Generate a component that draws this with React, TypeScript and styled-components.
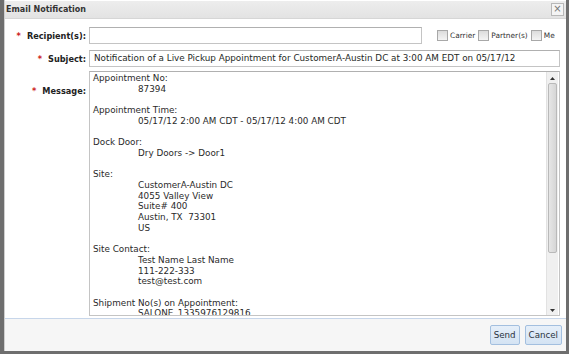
import styled, { createGlobalStyle } from "styled-components"

const GlobalStyle = createGlobalStyle`
  html, body {
    margin:0;
    padding:0;
    background:#6e6e6e;
    font-family:"DejaVu Sans", Verdana, sans-serif;
  }
`

type Line = { text: string; indent?: boolean }

const sections: Line[][] = [
  [{ text: "Appointment No:" }, { text: "87394", indent: true }],
  [{ text: "Appointment Time:" }, { text: "05/17/12 2:00 AM CDT - 05/17/12 4:00 AM CDT", indent: true }],
  [{ text: "Dock Door:" }, { text: "Dry Doors -> Door1", indent: true }],
  [
    { text: "Site:" },
    { text: "CustomerA-Austin DC", indent: true },
    { text: "4055 Valley View", indent: true },
    { text: "Suite# 400", indent: true },
    { text: "Austin, TX  73301", indent: true },
    { text: "US", indent: true },
  ],
  [
    { text: "Site Contact:" },
    { text: "Test Name Last Name", indent: true },
    { text: "111-222-333", indent: true },
    { text: "test@test.com", indent: true },
  ],
  [{ text: "Shipment No(s) on Appointment:" }, { text: "SALONE_1335976129816", indent: true }],
]

const App = () => {
  return (
    <>
      <GlobalStyle />
      <Dialog>
        <TitleBar>
          <span>Email Notification</span>
          <CloseButton>×</CloseButton>
        </TitleBar>

        <Body>
          <FieldRow>
            <Label><Req>*</Req>Recipient(s):</Label>
            <TextInput $width={333} />
            <Checks>
              <CheckItem><Box />Carrier</CheckItem>
              <CheckItem><Box />Partner(s)</CheckItem>
              <CheckItem><Box />Me</CheckItem>
            </Checks>
          </FieldRow>

          <FieldRow $gap={6}>
            <Label><Req>*</Req>Subject:</Label>
            <TextInput $width={471}>
              Notification of a Live Pickup Appointment for CustomerA-Austin DC at 3:00 AM EDT on 05/17/12
            </TextInput>
          </FieldRow>

          <MessageRow>
            <Label $top><Req>*</Req>Message:</Label>
            <MessageBox>
              <MessageText>
                {sections.map((sec, i) => (
                  <Section key={i}>
                    {sec.map((l, j) => (
                      <TextLine key={j} $indent={l.indent}>{l.text}</TextLine>
                    ))}
                  </Section>
                ))}
              </MessageText>
              <ScrollBar>
                <Arrow>
                  <svg width="5" height="3" viewBox="0 0 5 3"><path d="M2.5 0L5 3H0z" fill="#333" /></svg>
                </Arrow>
                <Thumb />
                <Track />
                <Arrow>
                  <svg width="5" height="3" viewBox="0 0 5 3"><path d="M0 0H5L2.5 3z" fill="#333" /></svg>
                </Arrow>
              </ScrollBar>
            </MessageBox>
          </MessageRow>
        </Body>

        <Footer>
          <Button>Send</Button>
          <Button>Cancel</Button>
        </Footer>
      </Dialog>
    </>
  )
}

export default App

const Dialog = styled.div`
  margin-left:4px;
  width:562px;
  height:351px;
  background:#fff;
  display:flex;
  flex-direction:column;
  box-sizing:border-box;
  border-left:1px solid #cfcfcf;
`

const TitleBar = styled.div`
  height:17px;
  margin-top:1px;
  background:linear-gradient(#ededed, #e3e3e3);
  border-bottom:1px solid #d6d6d6;
  display:flex;
  align-items:center;
  justify-content:space-between;
  padding:0 2px 0 1px;
  font-size:8px;
  font-weight:700;
  color:#333;
`

const CloseButton = styled.div`
  width:11px;
  height:11px;
  border:1px solid #b8b8b8;
  background:#f4f4f4;
  color:#777;
  font-size:10px;
  line-height:10px;
  text-align:center;
  font-weight:400;
`

const Body = styled.div`
  flex:1;
  padding:8px 5px 0 0;
  display:flex;
  flex-direction:column;
`

const FieldRow = styled.div<{ $gap?: number }>`
  display:flex;
  align-items:center;
  margin-top:${p => p.$gap || 0}px;
`

const MessageRow = styled.div`
  display:flex;
  align-items:flex-start;
  margin-top:4px;
`

const Label = styled.div<{ $top?: boolean }>`
  width:81px;
  margin-right:3px;
  text-align:right;
  font-size:8.2px;
  font-weight:700;
  color:#222;
  padding-top:${p => (p.$top ? "15px" : "0")};
`

const Req = styled.span`
  color:#cc2222;
  margin-right:6px;
`

const TextInput = styled.div<{ $width: number }>`
  width:${p => p.$width}px;
  height:17px;
  box-sizing:border-box;
  border:1px solid #c4c4c4;
  border-top-color:#b0b0b0;
  padding:0 4px;
  font-size:8.8px;
  line-height:15px;
  color:#1f2a1f;
  white-space:nowrap;
  overflow:hidden;
`

const Checks = styled.div`
  display:flex;
  margin-left:15px;
  gap:3px;
`

const CheckItem = styled.label`
  display:flex;
  align-items:center;
  font-size:7.4px;
  color:#333;
`

const Box = styled.span`
  width:9px;
  height:9px;
  border:1px solid #a8a8a8;
  background:linear-gradient(#dcdcdc, #f4f4f4);
  margin-right:2px;
`

const MessageBox = styled.div`
  width:471px;
  height:245px;
  box-sizing:border-box;
  border:1px solid #c4c4c4;
  border-top-color:#b0b0b0;
  display:flex;
  overflow:hidden;
`

const MessageText = styled.div`
  flex:1;
  padding:1px 3px;
  overflow:hidden;
  font-size:8.8px;
  line-height:10.7px;
  color:#2a2a2a;
`

const Section = styled.div`
  margin-bottom:10.7px;
`

const TextLine = styled.div<{ $indent?: boolean }>`
  padding-left:${p => (p.$indent ? "45px" : "0")};
  white-space:pre;
`

const ScrollBar = styled.div`
  width:11px;
  margin-right:1px;
  background:#f0f0f0;
  border-left:1px solid #e2e2e2;
  display:flex;
  flex-direction:column;
`

const Arrow = styled.div`
  height:8px;
  flex-shrink:0;
  display:flex;
  align-items:center;
  justify-content:center;
  margin:2px 0 1px;
`

const Thumb = styled.div`
  height:170px;
  flex-shrink:0;
  margin:0 1px;
  box-sizing:border-box;
  border:1px solid #b9b9b9;
  border-radius:2px;
  background:linear-gradient(90deg, #e6e6e6, #d6d6d6);
`

const Track = styled.div`
  flex:1;
`

const Footer = styled.div`
  height:33px;
  box-sizing:border-box;
  background:#f6f6f6;
  border-top:1px solid #c7d6ea;
  display:flex;
  align-items:center;
  justify-content:flex-end;
  gap:5px;
  padding-right:4px;
`

const Button = styled.button`
  height:20px;
  padding:0 3px;
  border:1px solid #a3bfdf;
  border-radius:2px;
  background:linear-gradient(#e6eff9, #d4e3f3);
  font-family:"DejaVu Sans", Verdana, sans-serif;
  font-size:8.7px;
  color:#2a3340;
`
